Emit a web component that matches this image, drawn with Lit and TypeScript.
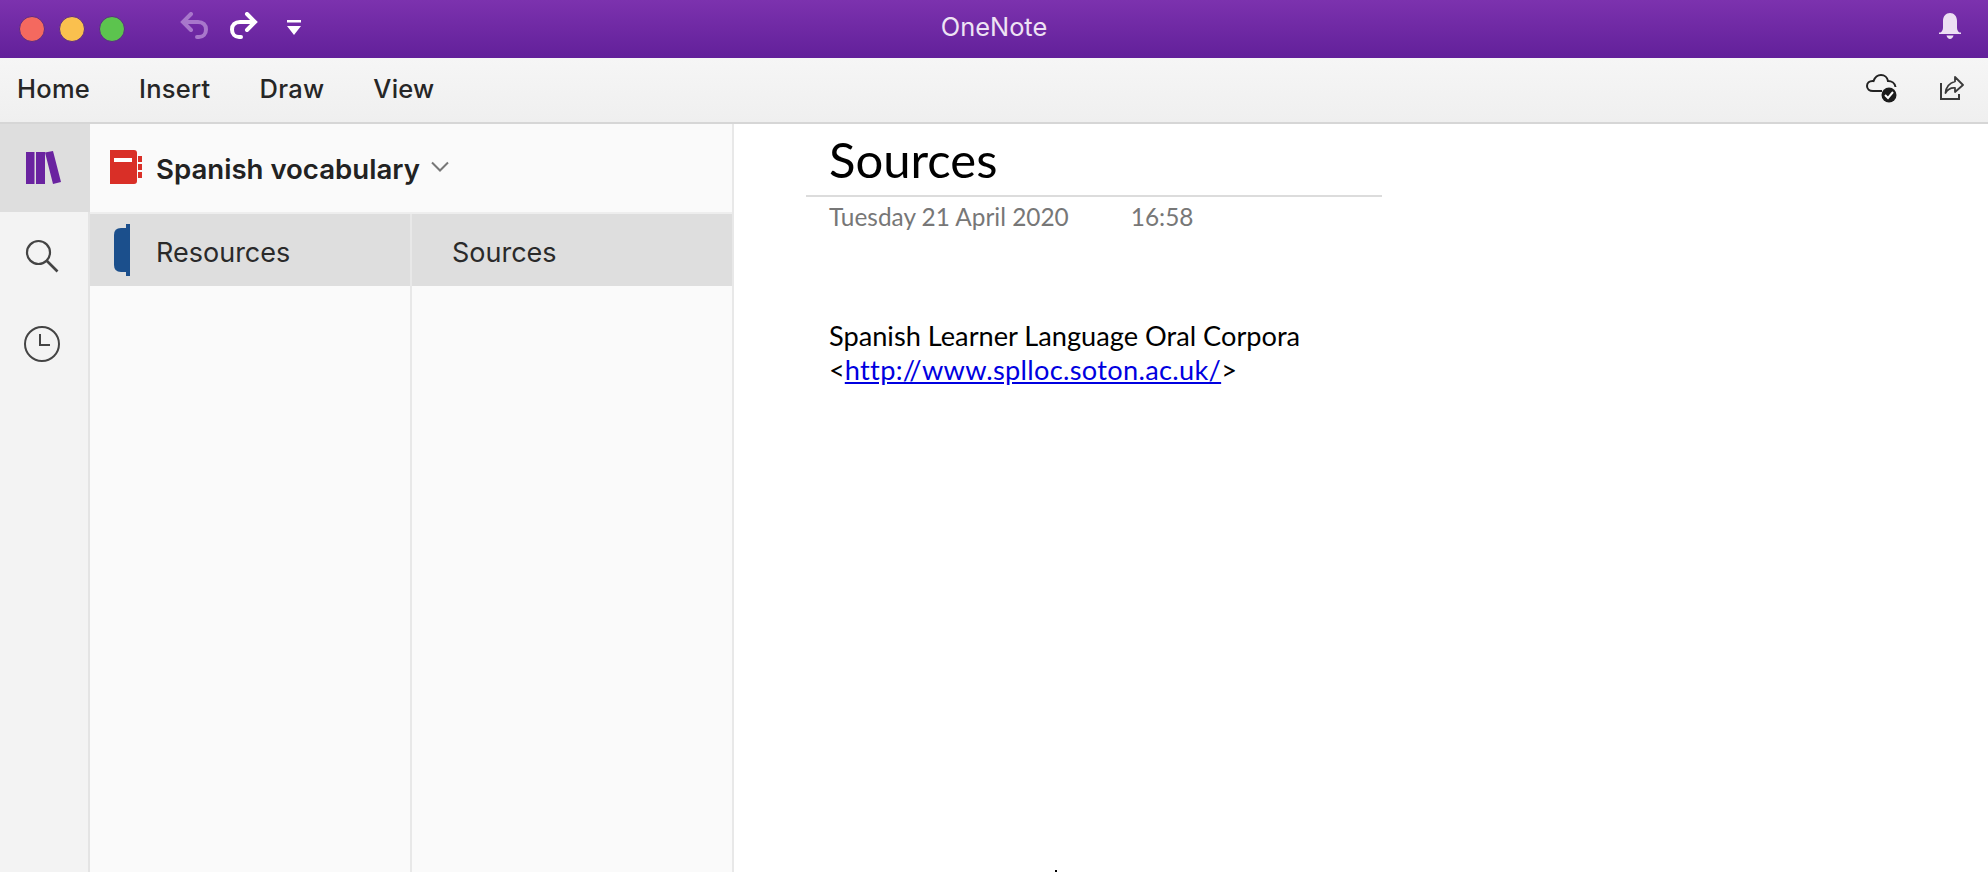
import { LitElement, css, html, svg } from 'lit'
import { customElement } from 'lit/decorators.js'

const undoPath = svg`<path d="M11 2 3 10l8 8M4 10h14c5 0 8 3 8 7.500s-3 7.500-7 7.500h-2" fill="none" stroke="currentColor" stroke-width="4" stroke-linecap="round" stroke-linejoin="miter"/>`

@customElement('app-root')
export class AppRoot extends LitElement {
  render() {
    return html`
      <div class="titlebar">
        <div class="lights">
          <span class="light red"></span>
          <span class="light yellow"></span>
          <span class="light green"></span>
        </div>
        <svg class="undo" width="30" height="28" viewBox="0 0 30 28">${undoPath}</svg>
        <svg class="redo" width="30" height="28" viewBox="0 0 30 28">${undoPath}</svg>
        <svg class="more" width="14" height="15" viewBox="0 0 14 15">
          <path d="M0 0h14v2.500H0zM0 6h14l-7 9z" fill="#fff"/>
        </svg>
        <div class="app-title">OneNote</div>
        <svg class="bell" width="22" height="26" viewBox="0 0 22 26">
          <path d="M0 19.500h1.500c1.500-1 2.500-2.500 2.500-5V8c0-5 3-8 7-8s7 3 7 8v6.500c0 2.500 1 4 2.500 5H22V21H0z" fill="#ecdff3"/>
          <path d="M7.500 22.500h7c-.5 2-2 3.500-3.500 3.500s-3-1.500-3.500-3.500z" fill="#ecdff3"/>
        </svg>
      </div>

      <div class="toolbar">
        <nav class="menu">
          <span>Home</span><span>Insert</span><span>Draw</span><span>View</span>
        </nav>
        <svg class="cloud" width="32" height="30" viewBox="0 0 32 30">
          <path d="M8 18H7c-3.500 0-6-2-6-5s2.500-5 5.500-5c.3 0 .7 0 1 .1C9 4 12 2 15 2c3.500 0 6.500 2.500 7 6 3.500 0 7 2 7.500 6" fill="none" stroke="#222" stroke-width="2"/>
          <path d="M7 18h9" stroke="#222" stroke-width="2"/>
          <circle cx="23" cy="22" r="7.500" fill="#1c1c1c"/>
          <path d="m19 22 3 3 5-6" fill="none" stroke="#fff" stroke-width="2"/>
        </svg>
        <svg class="share" width="24" height="24" viewBox="0 0 24 24">
          <path d="M1 7v16h18v-5" fill="none" stroke="#3a3a3a" stroke-width="2"/>
          <path d="M15 1l8 8-8 7v-4c-4-.5-7 1-9.500 5 .5-6 4-10 9.500-11.500z" fill="none" stroke="#3a3a3a" stroke-width="1.800" stroke-linejoin="round"/>
        </svg>
      </div>

      <div class="main">
        <aside class="rail">
          <div class="rail-item active">
            <svg width="36" height="34" viewBox="0 0 36 34">
              <path d="M0 1h8.500v32H0zM10 1h9v32h-9zM19 1.500l8-1.500 8 31-8 2z" fill="#6a23a0"/>
            </svg>
          </div>
          <div class="rail-item">
            <svg width="34" height="34" viewBox="0 0 34 34">
              <circle cx="13.500" cy="13.500" r="11.500" fill="none" stroke="#444" stroke-width="2.200"/>
              <path d="m22 22 10.500 10.500" stroke="#444" stroke-width="2.600"/>
            </svg>
          </div>
          <div class="rail-item">
            <svg width="38" height="38" viewBox="0 0 38 38">
              <circle cx="19" cy="19" r="17" fill="none" stroke="#444" stroke-width="2"/>
              <path d="M17 9v11h10" fill="none" stroke="#444" stroke-width="2"/>
            </svg>
          </div>
        </aside>

        <section class="nav">
          <header class="notebook">
            <svg class="nb-icon" width="32" height="34" viewBox="0 0 32 34">
              <path d="M0 0h24q3 0 3 3v28q0 3-3 3H0z" fill="#d92f27"/>
              <path d="M4 8h18v4H4z" fill="#fff"/>
              <path d="M28 6h4v6h-4zM28 14h4v6h-4zM28 22h4v6h-4z" fill="#d92f27"/>
            </svg>
            <span class="nb-name">Spanish vocabulary</span>
            <svg class="chevron" width="20" height="12" viewBox="0 0 20 12">
              <path d="m2 1.500 8 8 8-8" fill="none" stroke="#777" stroke-width="2"/>
            </svg>
          </header>
          <div class="columns">
            <div class="col">
              <div class="row section">
                <svg class="tab" width="16" height="52" viewBox="0 0 16 52">
                  <path d="M16 0v52h-4v-4H7q-7 0-7-7V11q0-7 7-7h5V0z" fill="#1b4f8c"/>
                </svg>
                <span>Resources</span>
              </div>
            </div>
            <div class="col">
              <div class="row page-row"><span>Sources</span></div>
            </div>
          </div>
        </section>

        <article class="page">
          <div class="head">
            <h1>Sources</h1>
            <div class="meta"><span>Tuesday 21 April 2020</span><span>16:58</span></div>
          </div>
          <div class="body">
            <div>Spanish Learner Language Oral Corpora</div>
            <div>&lt;<a href="#">http://www.splloc.soton.ac.uk/</a>&gt;</div>
          </div>
          <span class="speck"></span>
        </article>
      </div>
    `
  }

  static styles = css`
    :host {
      display: flex;
      flex-direction: column;
      width: 1988px;
      height: 872px;
      overflow: hidden;
      background: #fff;
      font-family: Inter, 'Liberation Sans', sans-serif;
      color: #222;
    }
    .titlebar {
      position: relative;
      flex: none;
      height: 58px;
      display: flex;
      align-items: center;
      background: linear-gradient(#7c32ae, #62209a);
    }
    .lights {
      display: flex;
      gap: 14px;
      margin-left: 19px;
    }
    .light {
      box-sizing: border-box;
      width: 26px;
      height: 26px;
      border-radius: 50%;
      border: 1px solid #5b2a86;
    }
    .red { background: #f4695f; }
    .yellow { background: #fac04e; }
    .green { background: #5cc44e; }
    .undo {
      margin-left: 55px;
      margin-top: -6px;
      color: #a877cb;
    }
    .redo {
      margin-left: 18px;
      margin-top: -6px;
      color: #fff;
      transform: scaleX(-1);
    }
    .more {
      margin-left: 29px;
      margin-top: -3px;
    }
    .app-title {
      position: absolute;
      left: 0;
      right: 0;
      top: 13px;
      text-align: center;
      font-size: 25.400px;
      line-height: 28px;
      color: #eee3f4;
    }
    .bell {
      margin-left: auto;
      margin-right: 27px;
      margin-top: -6px;
    }
    .toolbar {
      flex: none;
      box-sizing: border-box;
      height: 66px;
      display: flex;
      align-items: center;
      background: linear-gradient(#f6f6f6, #efefef);
      border-bottom: 2px solid #d6d6d6;
    }
    .menu {
      display: flex;
      gap: 49px;
      margin-left: 17px;
      margin-top: -3px;
      font-size: 25.500px;
      font-weight: 500;
      letter-spacing: 0.250px;
      color: #262626;
    }
    .cloud {
      margin-left: auto;
      margin-top: -4px;
    }
    .share {
      margin-left: 42px;
      margin-right: 24px;
      margin-top: -4px;
    }
    .main {
      flex: 1;
      display: flex;
      min-height: 0;
    }
    .rail {
      flex: none;
      width: 88px;
      background: #f3f3f3;
      border-right: 2px solid #e4e4e4;
    }
    .rail-item {
      box-sizing: border-box;
      display: flex;
      align-items: center;
      justify-content: center;
      height: 88px;
      padding-right: 4px;
    }
    .rail-item.active {
      width: 90px;
      padding-right: 3px;
      background: #dedede;
    }
    .nav {
      flex: none;
      box-sizing: border-box;
      width: 644px;
      display: flex;
      flex-direction: column;
      background: #fafafa;
      border-right: 2px solid #e8e8e8;
    }
    .notebook {
      flex: none;
      box-sizing: border-box;
      height: 90px;
      display: flex;
      align-items: center;
      padding-left: 20px;
      border-bottom: 2px solid #eeeeee;
    }
    .nb-icon { margin-top: -2px; }
    .nb-name {
      margin-left: 14px;
      padding-top: 2px;
      font-size: 27.600px;
      font-weight: 600;
      color: #222;
    }
    .chevron {
      margin-left: 10px;
      margin-top: -2px;
    }
    .columns {
      flex: 1;
      display: grid;
      grid-template-columns: 322px 320px;
    }
    .col:first-child {
      border-right: 2px solid #e8e8e8;
    }
    .row {
      box-sizing: border-box;
      display: flex;
      align-items: center;
      height: 72px;
      background: #dedede;
      font-size: 27px;
      color: #2a2a2a;
    }
    .section { padding-left: 24px; }
    .section span { margin-left: 26px; padding-top: 4px; }
    .page-row { padding-left: 40px; padding-top: 4px; }
    .page {
      position: relative;
      flex: 1;
      padding: 0 0 0 72px;
      font-family: Lato, 'Open Sans', sans-serif;
      color: #000;
    }
    .head { width: 576px; }
    h1 {
      margin: 0;
      height: 73px;
      padding-left: 23px;
      box-sizing: border-box;
      border-bottom: 2px solid #dcdcdc;
      font-size: 49px;
      font-weight: 400;
      line-height: 70px;
    }
    .meta {
      display: flex;
      gap: 62px;
      padding: 4px 0 0 23px;
      font-size: 24.400px;
      line-height: 32px;
      color: #777;
    }
    .body {
      margin-top: 86px;
      padding-left: 23px;
      font-size: 27.200px;
      line-height: 34px;
    }
    a {
      color: #0000e0;
      text-decoration: underline;
      letter-spacing: 0.300px;
    }
    .speck {
      position: absolute;
      left: 321px;
      bottom: 0;
      width: 2px;
      height: 2px;
      background: #000;
    }
  `
}
